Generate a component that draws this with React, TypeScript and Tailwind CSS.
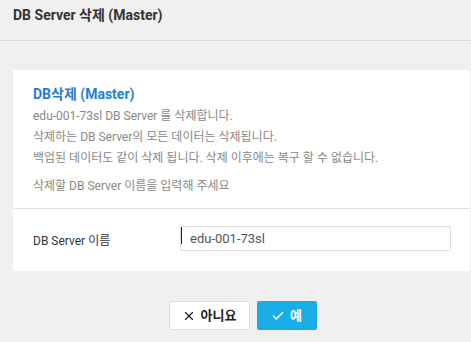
import { Check, X } from 'lucide-react'

const font = { fontFamily: 'Roboto, "Noto Sans CJK KR", sans-serif' }

export default function App() {
  return (
    <div className="w-[471px] h-[342px] bg-[#f0f0f0] overflow-hidden" style={font}>
      <div className="h-[41px] border-b border-[#dcdcdc] flex items-center px-[13px]">
        <h1 className="text-[14px] font-bold text-[#333] -mt-[10px]">DB Server 삭제 (Master)</h1>
      </div>

      <div className="ml-[13px] mr-px mt-[29px] bg-white rounded-[3px]">
        <div className="pt-[14px] pb-[11px] px-[20px] border-b border-[#e2e2e2]">
          <h2 className="text-[14px] leading-[20px] font-bold text-[#1f7fd6]">DB삭제 (Master)</h2>
          <div className="mt-[2px] text-[12px] leading-[21px] text-[#888]">
            <p>edu-001-73sl DB Server 를 삭제합니다.</p>
            <p>삭제하는 DB Server의 모든 데이터는 삭제됩니다.</p>
            <p>백업된 데이터도 같이 삭제 됩니다. 삭제 이후에는 복구 할 수 없습니다.</p>
            <p className="mt-[7px]">삭제할 DB Server 이름을 입력해 주세요</p>
          </div>
        </div>
        <div className="flex items-center pt-[17px] pb-[20px] pl-[20px]">
          <span className="w-[147px] text-[12px] text-[#333] mt-[5px]">DB Server 이름</span>
          <div className="relative w-[271px] h-[25px] border border-[#ddd] rounded-[2px] flex items-center pl-[9px] text-[13px] text-[#555]">
            <span className="absolute left-0 top-0 w-px h-[17px] bg-[#222]" />
            edu-001-73sl
          </div>
        </div>
      </div>

      <div className="flex justify-center gap-[7px] mt-[30px] pl-[14px]">
        <button className="w-[81px] h-[29px] bg-white border border-[#ddd] rounded-[2px] flex items-center justify-center gap-[5px] text-[13px] font-bold text-[#222]">
          <X size={14} strokeWidth={2} />
          아니요
        </button>
        <button className="w-[60px] h-[29px] bg-[#18ade8] rounded-[2px] flex items-center justify-center gap-[5px] text-[13px] font-bold text-white">
          <Check size={14} strokeWidth={2.5} />
          예
        </button>
      </div>
    </div>
  )
}
